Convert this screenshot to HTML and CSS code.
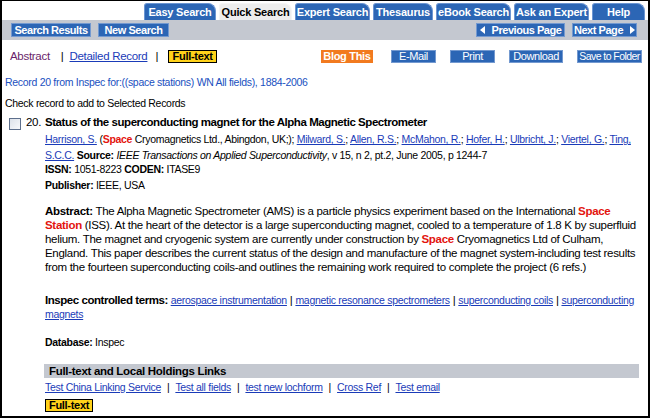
FILE: index.html
```html
<!DOCTYPE html>
<html>
<head>
<meta charset="utf-8">
<link rel="stylesheet" href="styles.css">
</head>
<body>
<div class="page">
  <div class="tabs">
    <span class="tab t1">Easy Search</span>
    <span class="tab t2 active">Quick Search</span>
    <span class="tab t3">Expert Search</span>
    <span class="tab t4">Thesaurus</span>
    <span class="tab t5">eBook Search</span>
    <span class="tab t6">Ask an Expert</span>
    <span class="tab t7">Help</span>
  </div>
  <div class="toolbar">
    <div class="tb-left">
      <span class="btn b-sr">Search Results</span>
      <span class="btn b-ns">New Search</span>
    </div>
    <div class="tb-right">
      <span class="btn b-prev"><span class="arr-l"></span>Previous Page</span>
      <span class="btn b-next">Next Page<span class="arr-r"></span></span>
    </div>
  </div>
  <div class="actions">
    <div class="views">
      <span class="v-abs">Abstract</span>
      <span class="sep s1">|</span>
      <a class="v-det">Detailed Record</a>
      <span class="sep s2">|</span>
      <span class="fulltext ft-top">Full-text</span>
    </div>
    <div class="acts">
      <span class="blog">Blog This</span>
      <span class="abtn a-email">E-Mail</span>
      <span class="abtn a-print">Print</span>
      <span class="abtn a-dl">Download</span>
      <span class="abtn a-save">Save to Folder</span>
    </div>
  </div>
  <div class="recline">Record 20 from Inspec for:((space stations) WN All fields), 1884-2006</div>
  <div class="checkline">Check record to add to Selected Records</div>
  <div class="record">
    <div class="rhead">
      <span class="cbox"></span>
      <span class="num">20.</span>
      <span class="title">Status of the superconducting magnet for the Alpha Magnetic Spectrometer</span>
    </div>
    <div class="body">
      <div class="authors"><a>Harrison, S.</a> (<b class="hl">Space</b> Cryomagnetics Ltd., Abingdon, UK;); <a>Milward, S.</a>; <a>Allen, R.S.</a>; <a>McMahon, R.</a>; <a>Hofer, H.</a>; <a>Ulbricht, J.</a>; <a>Viertel, G.</a>; <a>Ting, S.C.C.</a> <b>Source:</b> <i>IEEE Transactions on Applied Superconductivity</i>, v 15, n 2, pt.2, June 2005, p 1244-7</div>
      <div class="meta"><b>ISSN:</b> 1051-8223 <b>CODEN:</b> ITASE9</div>
      <div class="meta pub"><b>Publisher:</b> IEEE, USA</div>
      <div class="abstract"><b>Abstract:</b> The Alpha Magnetic Spectrometer (AMS) is a particle physics experiment based on the International <b class="hl">Space Station</b> (ISS). At the heart of the detector is a large superconducting magnet, cooled to a temperature of 1.8 K by superfluid helium. The magnet and cryogenic system are currently under construction by <b class="hl">Space</b> Cryomagnetics Ltd of Culham, England. This paper describes the current status of the design and manufacture of the magnet system-including test results from the fourteen superconducting coils-and outlines the remaining work required to complete the project (6 refs.)</div>
      <div class="terms"><b>Inspec controlled terms:</b> <a>aerospace instrumentation</a> | <a>magnetic resonance spectrometers</a> | <a>superconducting coils</a> | <a>superconducting magnets</a></div>
      <div class="db"><b>Database:</b> Inspec</div>
      <div class="ltitle">Full-text and Local Holdings Links</div>
      <div class="links"><a>Test China Linking Service</a><span class="ls">|</span><a>Test all fields</a><span class="ls">|</span><a>test new lochform</a><span class="ls">|</span><a>Cross Ref</a><span class="ls">|</span><a>Test email</a></div>
      <div class="ftrow"><span class="fulltext ft-bot">Full-text</span></div>
    </div>
  </div>
</div>
</body>
</html>
```
FILE: styles.css
```css
html, body { margin: 0; padding: 0; background: #fff; }
body { font-family: "Liberation Sans", Arial, sans-serif; font-size: 10.5px; letter-spacing: -0.3px; color: #000; }
.page {
  width: 650px; height: 418px; box-sizing: border-box;
  border: 2px solid #000; border-top-width: 1px;
  overflow: hidden;
}
a { color: #1a3bb8; text-decoration: underline; }
.tabs { display: flex; justify-content: flex-end; gap: 3px; height: 17px; padding: 2px 3px 0 0; }
.tab {
  display: flex; align-items: center; justify-content: center; white-space: nowrap;
  background: #2c66b5; color: #fff; font-weight: bold; font-size: 11px; letter-spacing: -0.2px;
  border-radius: 3px 8px 0 0; border: 1px solid #6b95d2; border-bottom: none;
  box-sizing: border-box; height: 17px;
}
.tab.active { background: #ededed; color: #000; border-color: #f4f4f4; }
.t1 { width: 72px; } .t2 { width: 73px; } .t3 { width: 75px; } .t4 { width: 60px; }
.t5 { width: 75px; } .t6 { width: 75px; } .t7 { width: 53px; }
.toolbar {
  background: #c4c8d0; height: 20px; display: flex; justify-content: space-between;
  align-items: center; padding: 0 11px 0 9px;
}
.tb-left, .tb-right { display: flex; gap: 7px; }
.btn {
  background: #2c66b5; color: #fff; font-weight: bold; font-size: 11px; letter-spacing: -0.45px;
  height: 14px; box-sizing: border-box; border: 1px solid #7399d0; white-space: nowrap;
  display: flex; align-items: center; justify-content: center; gap: 7px;
}
.b-sr { width: 80px; } .b-ns { width: 71px; }
.b-prev { width: 89px; } .b-next { width: 65px; }
.arr-l { width: 0; height: 0; border-top: 4px solid transparent; border-bottom: 4px solid transparent; border-right: 5px solid #fff; }
.arr-r { width: 0; height: 0; border-top: 4px solid transparent; border-bottom: 4px solid transparent; border-left: 5px solid #fff; }
.actions { display: flex; justify-content: space-between; align-items: center; padding: 9px 6px 0 8px; height: 14px; }
.views { display: flex; align-items: center; font-size: 11.5px; letter-spacing: -0.3px; }
.v-abs { color: #6a1e6a; }
.s1 { margin: 0 6px 0 11px; }
.s2 { margin: 0 10px 0 8px; }
.v-det { color: #1a3bb8; }
.fulltext {
  display: inline-block; background: #ffd21a; border: 1px solid #000; font-weight: bold;
  font-size: 11px; letter-spacing: -0.3px; line-height: 11px; height: 13px; box-sizing: border-box;
  padding: 0 3px; color: #000; white-space: nowrap;
}
.ft-top { width: 49px; text-align: center; }
.acts { display: flex; align-items: center; }
.blog { background: #f27a1f; color: #fff; font-weight: bold; font-size: 11px; letter-spacing: -0.3px; width: 52px; text-align: center; height: 13px; line-height: 13px; margin-right: 18px; white-space: nowrap; }
.abtn {
  background: #2c66b5; color: #fff; font-size: 11px; letter-spacing: -0.4px; height: 13px; line-height: 11px;
  box-sizing: border-box; border: 1px solid #7399d0; text-align: center; white-space: nowrap;
}
.a-email { width: 45px; margin-right: 14px; }
.a-print { width: 45px; margin-right: 14px; }
.a-dl { width: 54px; margin-right: 14px; }
.a-save { width: 65px; font-size: 10.5px; letter-spacing: -0.55px; }
.recline { color: #1a50c0; line-height: 13px; padding: 13px 0 0 3px; }
.checkline { line-height: 13px; padding: 8px 0 0 3px; }
.record { padding: 5px 0 0 7px; }
.rhead { display: flex; align-items: center; height: 14px; }
.cbox {
  width: 12px; height: 12px; box-sizing: border-box; border: 1px solid #5d6f8c;
  background: linear-gradient(135deg, #dde2ea, #f8f9fb); margin: 3px 5px 0 0; align-self: flex-start;
}
.num { font-size: 11.5px; width: 19px; }
.title { font-weight: bold; font-size: 11.5px; letter-spacing: -0.45px; }
.body { padding-left: 36px; padding-right: 9px; }
.authors { line-height: 16px; margin-top: 2px; }
.meta { line-height: 14px; margin-top: -1px; }
.meta.pub { margin-top: 2px; }
.hl { color: #e3140e; }
.abstract { font-size: 11.5px; line-height: 14px; margin-top: 12px; letter-spacing: -0.3px; }
.terms { font-size: 11.5px; line-height: 14px; margin-top: 19px; }
.terms b { letter-spacing: -0.45px; }
.terms a { font-size: 10.5px; }
.db { line-height: 14px; margin-top: 14px; }
.ltitle { background: #c4c8d0; font-weight: bold; font-size: 11.5px; height: 14px; line-height: 14px; padding-left: 5px; margin: 15px 0 0 -1px; }
.links { line-height: 14px; margin-top: 2px; }
.ls { margin: 0 6px; }
.ftrow { margin-top: 5px; display: flex; }
```
